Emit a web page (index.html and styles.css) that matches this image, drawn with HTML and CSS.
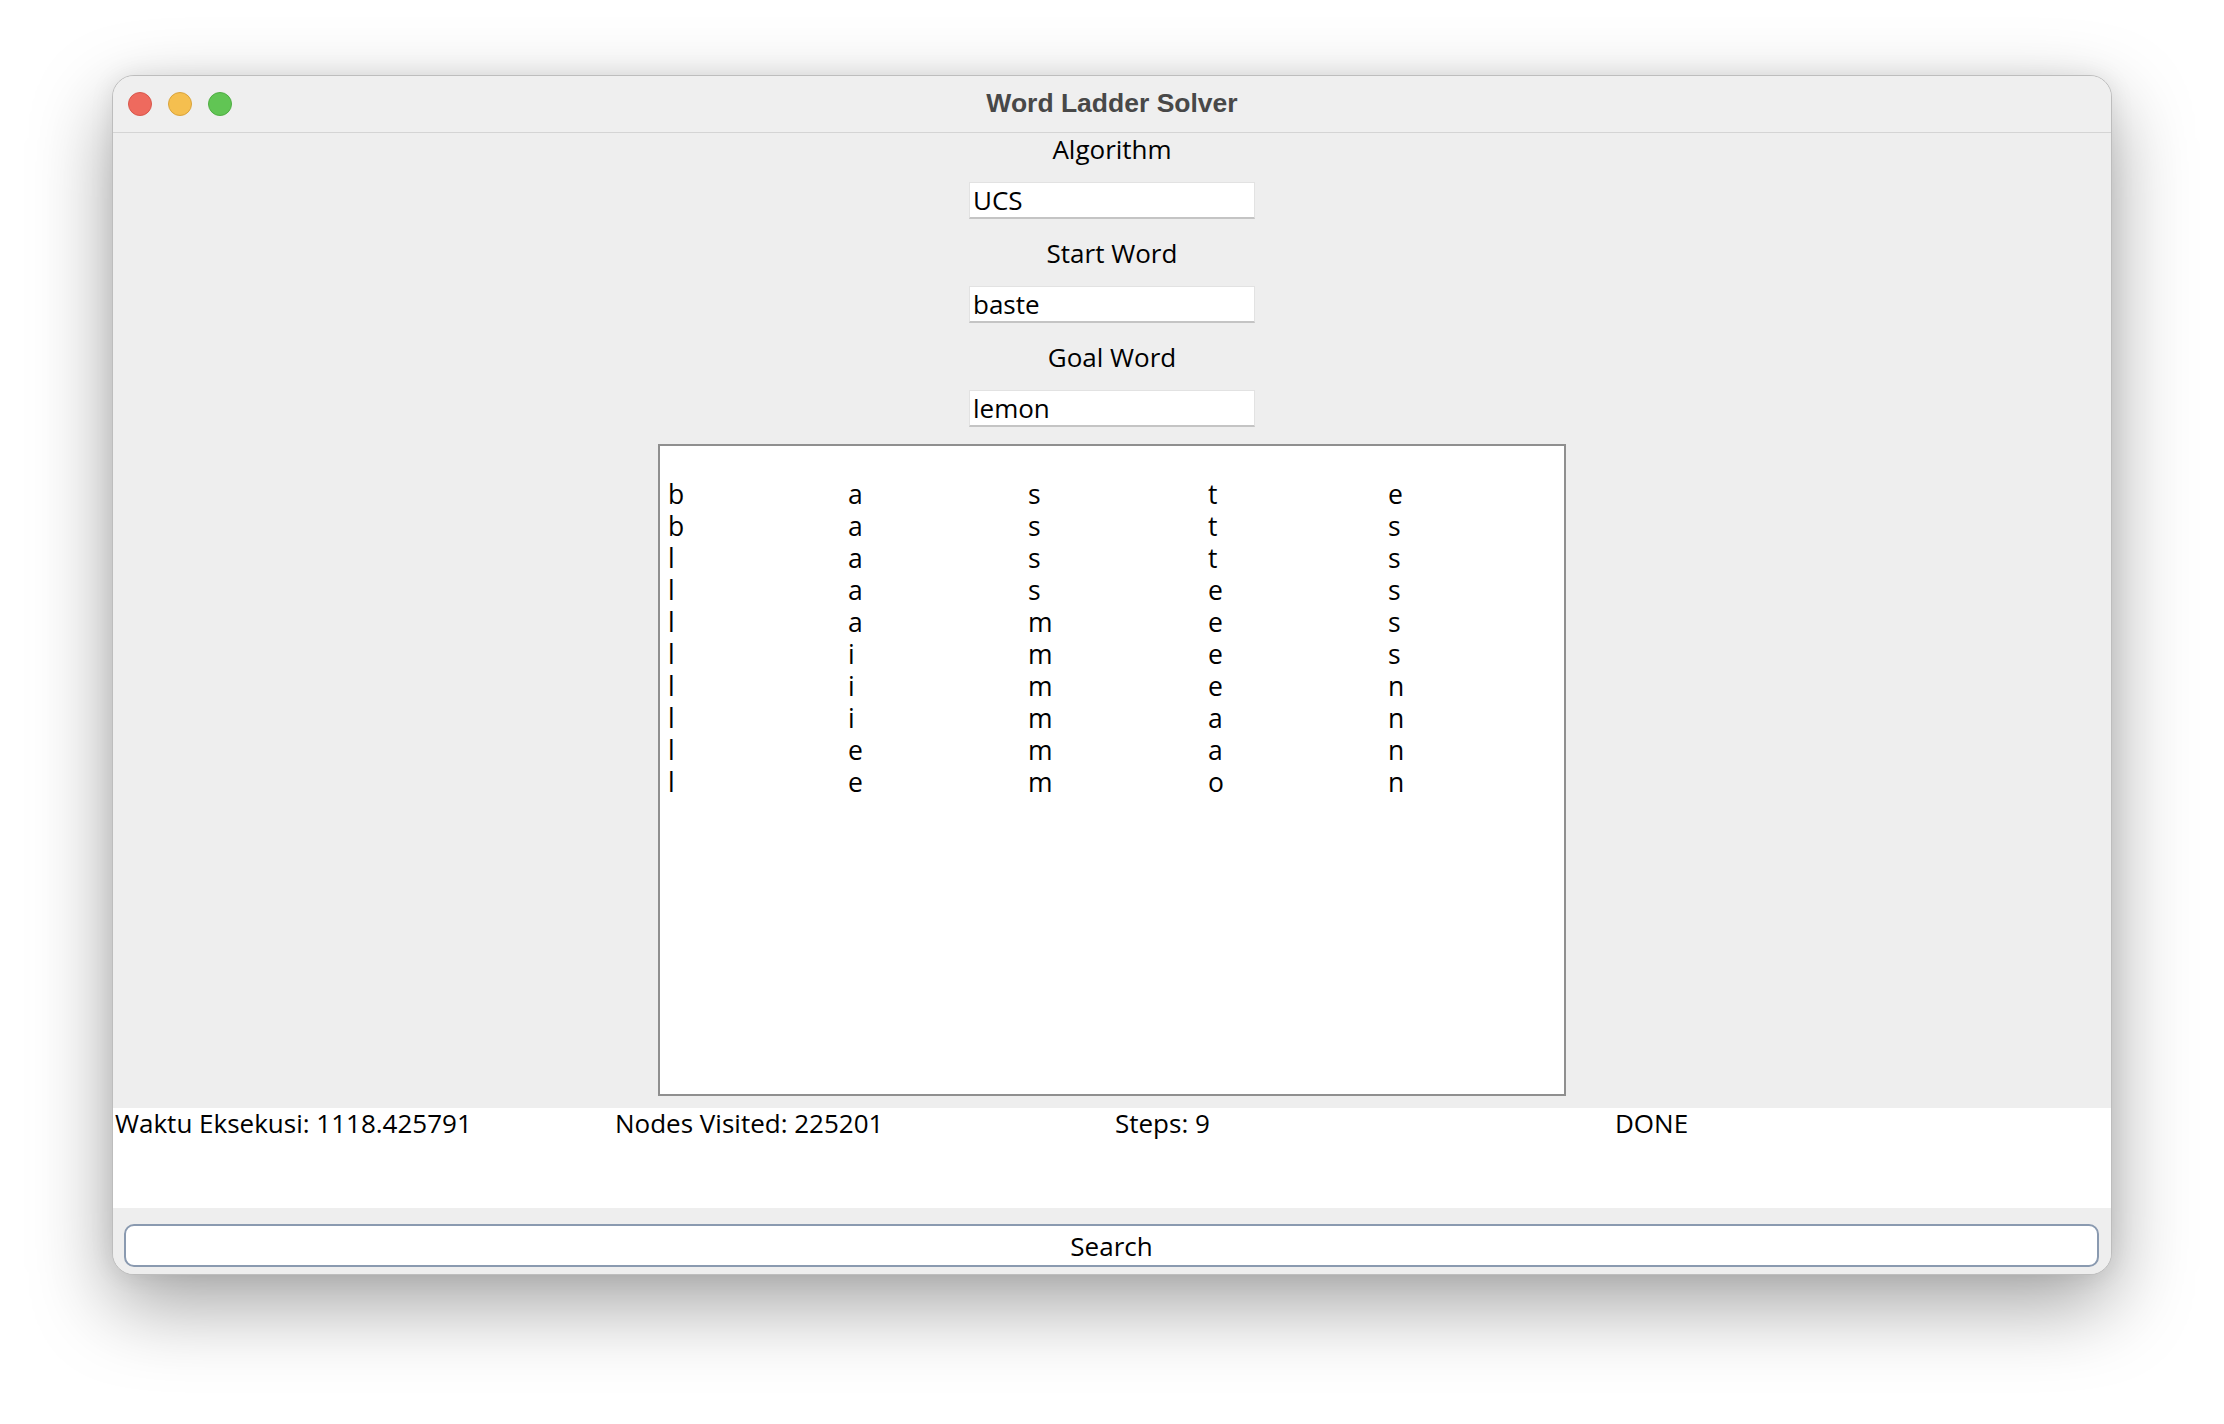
FILE: index.html
```html
<!DOCTYPE html>
<html lang="en">
<head>
<meta charset="utf-8">
<title>Word Ladder Solver</title>
<link rel="stylesheet" href="styles.css">
</head>
<body>
<div class="window">
  <div class="titlebar">
    <div class="lights">
      <span class="light red"></span>
      <span class="light yellow"></span>
      <span class="light green"></span>
    </div>
    <div class="title">Word Ladder Solver</div>
    <div></div>
  </div>
  <div class="main">
    <div class="label">Algorithm</div>
    <div class="field">UCS</div>
    <div class="label">Start Word</div>
    <div class="field">baste</div>
    <div class="label">Goal Word</div>
    <div class="field last">lemon</div>
    <div class="output">
      <span>b</span><span>a</span><span>s</span><span>t</span><span>e</span>
      <span>b</span><span>a</span><span>s</span><span>t</span><span>s</span>
      <span>l</span><span>a</span><span>s</span><span>t</span><span>s</span>
      <span>l</span><span>a</span><span>s</span><span>e</span><span>s</span>
      <span>l</span><span>a</span><span>m</span><span>e</span><span>s</span>
      <span>l</span><span>i</span><span>m</span><span>e</span><span>s</span>
      <span>l</span><span>i</span><span>m</span><span>e</span><span>n</span>
      <span>l</span><span>i</span><span>m</span><span>a</span><span>n</span>
      <span>l</span><span>e</span><span>m</span><span>a</span><span>n</span>
      <span>l</span><span>e</span><span>m</span><span>o</span><span>n</span>
    </div>
  </div>
  <div class="status">
    <div class="stat">Waktu Eksekusi: 1118.425791</div>
    <div class="stat">Nodes Visited: 225201</div>
    <div class="stat">Steps: 9</div>
    <div class="stat">DONE</div>
  </div>
  <div class="footer">
    <button class="search">Search</button>
  </div>
</div>
</body>
</html>
```

FILE: styles.css
```css
* { box-sizing: border-box; }

html, body {
  margin: 0;
  padding: 0;
  background: #ffffff;
}

html { min-height: 1424px; }

body {
  min-height: 1424px;
  padding: 75px 0 149px 112px;
  font-family: "Open Sans", "DejaVu Sans", sans-serif;
  color: #000;
}

.window {
  width: 2000px;
  height: 1200px;
  border: 1px solid #bdbdbd;
  border-radius: 22px;
  background: #eeeeee;
  overflow: hidden;
  display: flex;
  flex-direction: column;
  box-shadow: 0 30px 80px rgba(0, 0, 0, 0.36), 0 0 24px rgba(0, 0, 0, 0.08);
}

.titlebar {
  height: 57px;
  flex: none;
  border-bottom: 1px solid #d4d4d4;
  background: #efefef;
  display: grid;
  grid-template-columns: 1fr auto 1fr;
  align-items: center;
}

.lights {
  display: flex;
  gap: 16px;
  padding-left: 15px;
}

.light {
  width: 24px;
  height: 24px;
  border-radius: 50%;
  display: block;
}
.light.red { background: #ee6a5e; border: 1px solid #d8574c; }
.light.yellow { background: #f5bf4f; border: 1px solid #d9a33c; }
.light.green { background: #61c554; border: 1px solid #4fad43; }

.title {
  font-family: "Liberation Sans", Arial, sans-serif;
  font-weight: bold;
  font-size: 26.5px;
  color: #484848;
  padding-bottom: 2px;
}

.main {
  flex: none;
  height: 975px;
  padding-top: 1px;
  display: flex;
  flex-direction: column;
  align-items: center;
  background: #eeeeee;
}

.label {
  font-size: 26px;
  line-height: 30px;
  height: 30px;
  margin-bottom: 18px;
}

.field {
  width: 286px;
  height: 37px;
  background: #ffffff;
  border: 1px solid #e2e2e2;
  border-bottom: 2px solid #c4c4c4;
  font-size: 26px;
  line-height: 34px;
  padding-left: 3px;
  margin-bottom: 19px;
}

.field.last { margin-bottom: 17px; }

.output {
  width: 908px;
  height: 652px;
  background: #ffffff;
  border: 2px solid #8f8f8f;
  padding: 32px 0 0 8px;
  display: grid;
  grid-template-columns: repeat(5, 180px);
  grid-auto-rows: 32px;
  align-content: start;
  font-size: 26.5px;
  line-height: 32px;
  font-weight: 500;
}

.status {
  flex: none;
  height: 100px;
  background: #ffffff;
  display: grid;
  grid-template-columns: repeat(4, 500px);
  align-items: start;
}

.stat {
  font-size: 26px;
  line-height: 30px;
  padding-left: 2px;
  white-space: nowrap;
}

.footer {
  flex: 1;
  background: #eeeeee;
  padding: 16px 12px 0 11px;
}

.search {
  display: block;
  width: 100%;
  height: 43px;
  background: #ffffff;
  border: 2px solid #8a9ab0;
  border-radius: 10px;
  font-family: "Open Sans", "DejaVu Sans", sans-serif;
  font-size: 26px;
  line-height: 36px;
  color: #000;
  padding: 0;
}
```
